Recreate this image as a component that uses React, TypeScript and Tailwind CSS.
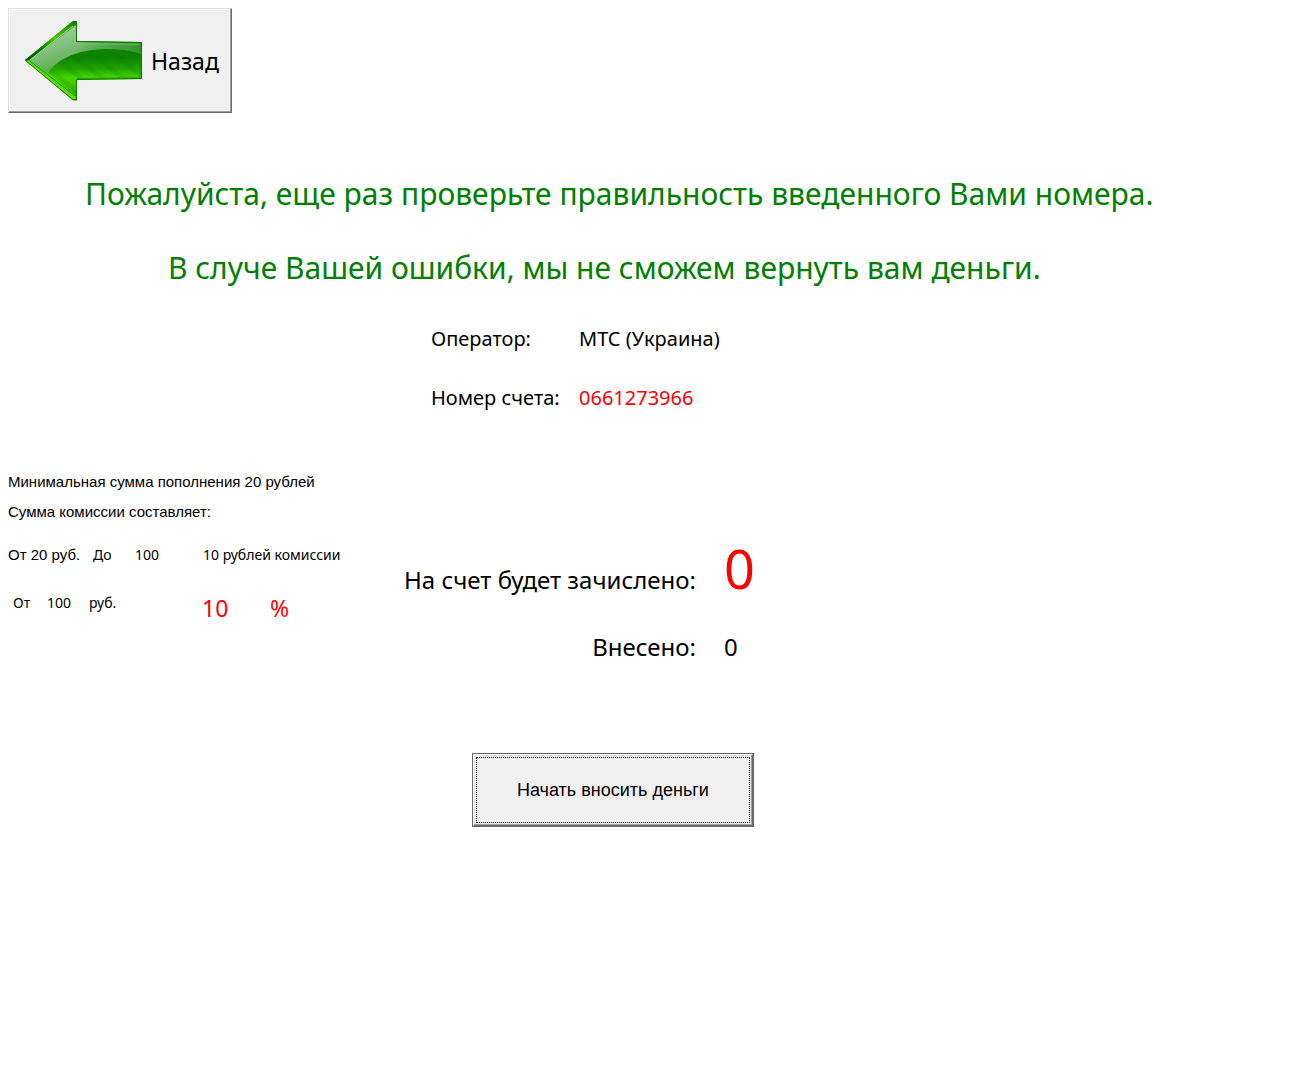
function BackArrow() {
  return (
    <svg width="118" height="80" viewBox="0 0 118 80" aria-hidden="true" className="shrink-0">
      <defs>
        <linearGradient id="arrowBody" gradientUnits="userSpaceOnUse" x1="0" y1="22" x2="0" y2="79">
          <stop offset="0" stopColor="#0f8a00" />
          <stop offset="0.25" stopColor="#0c8200" />
          <stop offset="0.45" stopColor="#1fa400" />
          <stop offset="0.6" stopColor="#45d400" />
          <stop offset="0.75" stopColor="#3ec800" />
          <stop offset="1" stopColor="#1a9000" />
        </linearGradient>
        <linearGradient id="arrowGloss" gradientUnits="userSpaceOnUse" x1="20" y1="0" x2="36" y2="50">
          <stop offset="0" stopColor="#a9d6a6" />
          <stop offset="0.45" stopColor="#8cc488" />
          <stop offset="1" stopColor="#55ab4c" />
        </linearGradient>
        <linearGradient id="arrowGlossBar" gradientUnits="userSpaceOnUse" x1="50" y1="0" x2="116" y2="0">
          <stop offset="0" stopColor="#2f9a26" stopOpacity="0" />
          <stop offset="1" stopColor="#2f8f26" stopOpacity="0.8" />
        </linearGradient>
        <linearGradient id="arrowTip" gradientUnits="userSpaceOnUse" x1="0" y1="39" x2="48" y2="0">
          <stop offset="0" stopColor="#075400" />
          <stop offset="0.35" stopColor="#0d8000" />
          <stop offset="0.6" stopColor="#48cc00" />
          <stop offset="1" stopColor="#128400" />
        </linearGradient>
        <pattern id="arrowGrain" width="13" height="12" patternUnits="userSpaceOnUse" patternTransform="rotate(-52)">
          <rect width="5" height="12" fill="#0a7000" opacity="0.12" />
        </pattern>
        <clipPath id="arrowClip">
          <path d="M5 39 51 4V21L116 22V58L51 59V76Z" />
        </clipPath>
      </defs>
      <path d="M0 39 48 0H52V20L117 21V58L52 59V79H48Z" fill="url(#arrowBody)" />
      <path d="M0 39 48 0H52L51 4 5 39Z" fill="url(#arrowTip)" />
      <path d="M1 40 48 78H51L50 74 6 39Z" fill="#59e000" />
      <path d="M0 39 48 79H52" fill="none" stroke="#1c8a00" />
      <path d="M5 40 50 75" fill="none" stroke="#159000" />
      <path d="M5 39 51 4V21L116 22V58L51 59V76Z" fill="url(#arrowGrain)" />
      <g clipPath="url(#arrowClip)">
        <path d="M0 39 51 0V21H117V33C94 26 68 27 50 33C38 37 29 43 22 53Z" fill="url(#arrowGloss)" />
        <path d="M50 20H117V33C94 26 68 27 50 33Z" fill="url(#arrowGlossBar)" />
      </g>
      <path d="M5 39 48 5" fill="none" stroke="#b0e29f" />
      <path d="M51.5 0V20.5L116.5 21.5V57.5L51.5 58.5V79" fill="none" stroke="#0f7a00" />
      <path d="M50.5 5V22.5L114 23.5" fill="none" stroke="#7fc878" opacity="0.7" />
      <path d="M52 57.5 115 56.5V24" fill="none" stroke="#1b8d00" opacity="0.7" />
    </svg>
  );
}

export default function App() {
  return (
    <main className="min-h-screen bg-white p-2 font-['Noto_Sans',sans-serif] text-black">
      <button
        type="button"
        className="flex h-[105px] items-center gap-2 border border-t-[#e3e3e3] border-r-[#696969] border-b-[#696969] border-l-[#e3e3e3] bg-[#f0f0f0] pr-3 pl-4 text-[23px] leading-8 shadow-[inset_-1px_-1px_0_#a0a0a0,inset_1px_1px_0_#ffffff]"
      >
        <BackArrow />
        Назад
      </button>

      <h1 className="mt-[61px] text-[30px] leading-10 text-[#008000]">
        <span className="block pl-[77px]">Пожалуйста, еще раз проверьте правильность введенного Вами номера.</span>
        <span className="mt-[34px] block pl-[160px]">В случе Вашей ошибки, мы не сможем вернуть вам деньги.</span>
      </h1>

      <dl className="mt-[37px] ml-[423px] grid grid-cols-[148px_auto] justify-start gap-y-[31px] text-[20px] leading-7 whitespace-nowrap">
        <dt>Оператор:</dt>
        <dd>МТС (Украина)</dd>
        <dt>Номер счета:</dt>
        <dd className="text-[#ff0000]">0661273966</dd>
      </dl>

      <div className="mt-[58px] flex">
        <section className="w-[388px] shrink-0 font-['Liberation_Sans',sans-serif] text-[15px] leading-6 whitespace-nowrap">
          <p>Минимальная сумма пополнения 20 рублей</p>
          <p className="mt-1.5">Сумма комиссии составляет:</p>
          <div className="mt-[19px] grid grid-cols-[85px_42px_68px_auto] justify-start">
            <span>От 20 руб.</span>
            <span className="font-['Noto_Sans',sans-serif] text-[14px]">До</span>
            <span className="font-['Noto_Sans',sans-serif] text-[14px]">100</span>
            <span className="font-['Noto_Sans',sans-serif] text-[14px]">10 рублей комиссии</span>
          </div>
          <div className="mt-6 grid grid-cols-[34px_42px_113px_68px_auto] justify-start pl-[5px] font-['Noto_Sans',sans-serif] text-[14px]">
            <span>От</span>
            <span>100</span>
            <span>руб.</span>
            <span className="text-[23px] leading-[34px] text-[#ff0000]">10</span>
            <span className="text-[23px] leading-[34px] text-[#ff0000]">%</span>
          </div>
        </section>

        <dl className="mt-[66px] grid grid-cols-[300px_auto] items-end justify-start gap-x-7 text-[24px] leading-8 whitespace-nowrap">
          <dt className="pb-1 text-right">На счет будет зачислено:</dt>
          <dd className="text-[54px] leading-[64px] text-[#ff0000]">0</dd>
          <dt className="mt-[31px] text-right">Внесено:</dt>
          <dd>0</dd>
        </dl>
      </div>

      <button
        type="button"
        className="mt-[90px] ml-[464px] block border border-[#696969] bg-[#f0f0f0] font-['Liberation_Sans',sans-serif] text-[18px] leading-[26px]"
      >
        <span className="block border border-t-white border-r-[#696969] border-b-[#696969] border-l-white p-0.5 shadow-[inset_-1px_-1px_0_#a0a0a0,inset_1px_1px_0_#e3e3e3]">
          <span className="block border border-dotted border-black px-10 py-[19px]">Начать вносить деньги</span>
        </span>
      </button>
    </main>
  );
}
